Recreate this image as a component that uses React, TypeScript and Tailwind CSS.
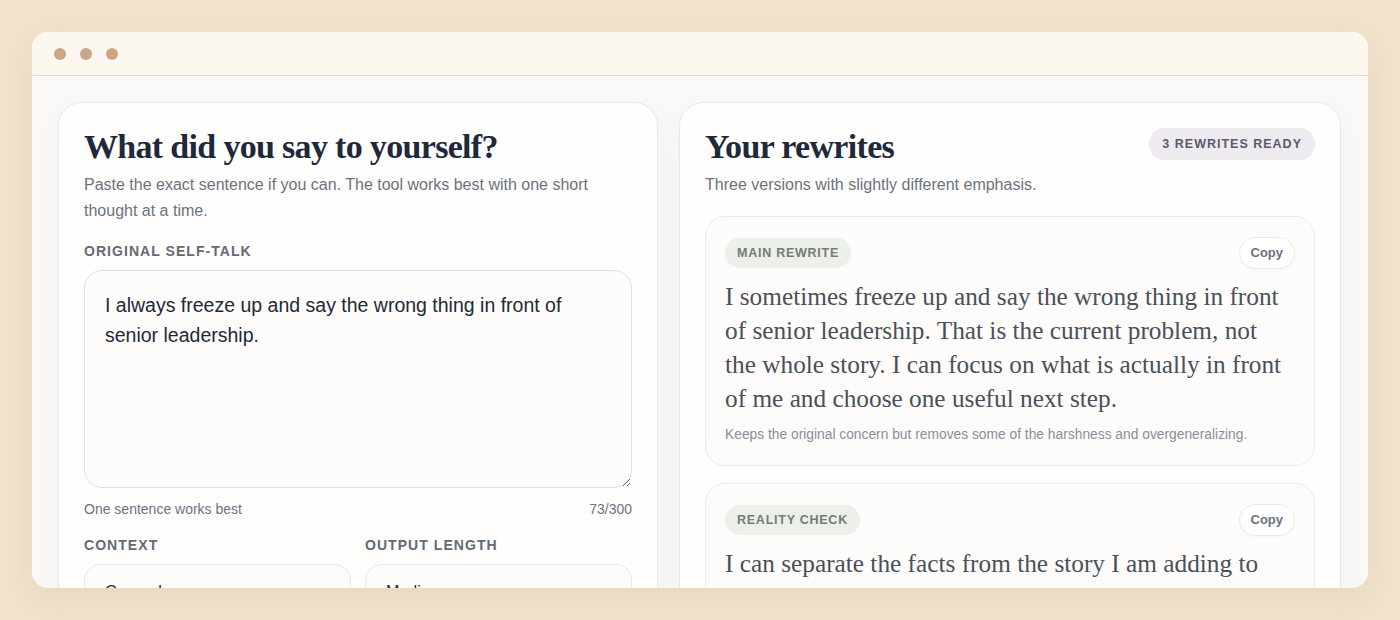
import { ChevronDown } from 'lucide-react';

const sans = { fontFamily: '"Liberation Sans", Arial, sans-serif' };
const serif = { fontFamily: '"Liberation Serif", "Times New Roman", serif' };

interface Rewrite {
  tag: string;
  text: string;
  note?: string;
}

const rewrites: Rewrite[] = [
  {
    tag: 'Main rewrite',
    text: 'I sometimes freeze up and say the wrong thing in front of senior leadership. That is the current problem, not the whole story. I can focus on what is actually in front of me and choose one useful next step.',
    note: 'Keeps the original concern but removes some of the harshness and overgeneralizing.',
  },
  {
    tag: 'Reality check',
    text: 'I can separate the facts from the story I am adding to them. This moment is uncomfortable, but it does not define my whole ability.',
  },
];

function Label({ children }: { children: React.ReactNode }) {
  return (
    <div className="text-[14px] leading-5 font-bold uppercase tracking-[0.075em] text-[#636a74]">
      {children}
    </div>
  );
}

function SelectBox({ value }: { value: string }) {
  return (
    <div className="relative mt-[9px] h-[52px] rounded-2xl border border-[#ebe8e4] bg-[#fdfcfb] px-5 pt-[15px] text-[16px] text-[#1f2937]">
      {value}
      <ChevronDown className="absolute right-[10px] top-[20px] h-4 w-4 text-[#6b7280]" />
    </div>
  );
}

function RewriteCard({ item }: { item: Rewrite }) {
  return (
    <div className="rounded-[20px] border border-[#eeebe7] bg-[#fdfcfb] px-[19px] pt-5 pb-5">
      <div className="flex items-center justify-between">
        <span className="inline-flex h-[30px] items-center rounded-full bg-[#edefeb] px-3 text-[12.5px] font-bold uppercase tracking-[0.06em] text-[#737d74]">
          {item.tag}
        </span>
        <button className="h-8 rounded-full border border-[#eeebe7] bg-white px-[11px] text-[13px] font-semibold text-[#6b7280] shadow-[0_1px_2px_rgba(0,0,0,0.03)]">
          Copy
        </button>
      </div>
      <p className="mt-[10px] pr-3 text-[25.3px] leading-[34px] text-[#4b5058]" style={serif}>
        {item.text}
      </p>
      {item.note && (
        <p className="mt-[10px] text-[13.8px] leading-5 text-[#8a8f98]">{item.note}</p>
      )}
    </div>
  );
}

export default function App() {
  return (
    <div className="h-[620px] overflow-hidden bg-[#f1e2cc] p-8" style={sans}>
      <div className="flex h-full flex-col overflow-hidden rounded-2xl bg-[#faf9f7] shadow-[0_10px_30px_rgba(120,90,50,0.08)]">
        {/* window bar */}
        <div className="flex h-[44px] shrink-0 items-center gap-[14px] border-b border-[#ead9bf] bg-[#fdf8ef] pl-[22px]">
          <span className="h-3 w-3 rounded-full bg-[#c9a889]" />
          <span className="h-3 w-3 rounded-full bg-[#c9a889]" />
          <span className="h-3 w-3 rounded-full bg-[#c9a889]" />
        </div>

        <div className="grid min-h-0 flex-1 grid-cols-[600px_1fr] gap-[21px] pl-[26px] pr-[27px] pt-[26px]">
          {/* left panel */}
          <section className="rounded-t-[24px] border border-[#ebe8e3] bg-[#fffefd] px-[25px] pt-6 shadow-[0_8px_30px_rgba(0,0,0,0.035)]">
            <h1 className="text-[34px] leading-10 font-bold tracking-[-0.02em] text-[#1e293b]" style={serif}>
              What did you say to yourself?
            </h1>
            <p className="mt-[5px] text-[16px] leading-[26px] text-[#6b7280]">
              Paste the exact sentence if you can. The tool works best with one short thought at a time.
            </p>

            <div className="mt-[17px]">
              <Label>Original self-talk</Label>
            </div>
            <textarea
              readOnly
              defaultValue="I always freeze up and say the wrong thing in front of senior leadership."
              className="mt-[9px] block h-[218px] w-full resize-y rounded-[18px] border border-[#e3e0dc] bg-[#fdfcfa] px-5 pt-[19px] text-[19.5px] leading-[30px] text-[#1f2937] outline-none"
            />
            <div className="mt-[11px] flex justify-between text-[14px] leading-5 text-[#6b7280]">
              <span>One sentence works best</span>
              <span>73/300</span>
            </div>

            <div className="mt-4 grid grid-cols-2 gap-[14px]">
              <div>
                <Label>Context</Label>
                <SelectBox value="General" />
              </div>
              <div>
                <Label>Output length</Label>
                <SelectBox value="Medium" />
              </div>
            </div>
          </section>

          {/* right panel */}
          <section className="rounded-t-[24px] border border-[#ebe8e3] bg-[#fffefd] px-[25px] pt-6 shadow-[0_8px_30px_rgba(0,0,0,0.035)]">
            <div className="flex items-start justify-between">
              <h2 className="text-[34px] leading-10 font-bold tracking-[-0.02em] text-[#1e293b]" style={serif}>
                Your rewrites
              </h2>
              <span className="mt-[1px] inline-flex h-8 items-center rounded-full bg-[#edeaf0] px-[13px] text-[12.5px] font-bold uppercase tracking-[0.08em] text-[#5d5870]">
                3 rewrites ready
              </span>
            </div>
            <p className="mt-[5px] text-[16px] leading-[26px] text-[#6b7280]">
              Three versions with slightly different emphasis.
            </p>

            <div className="mt-[18px] flex flex-col gap-[17px]">
              {rewrites.map((r) => (
                <RewriteCard key={r.tag} item={r} />
              ))}
            </div>
          </section>
        </div>
      </div>
    </div>
  );
}
